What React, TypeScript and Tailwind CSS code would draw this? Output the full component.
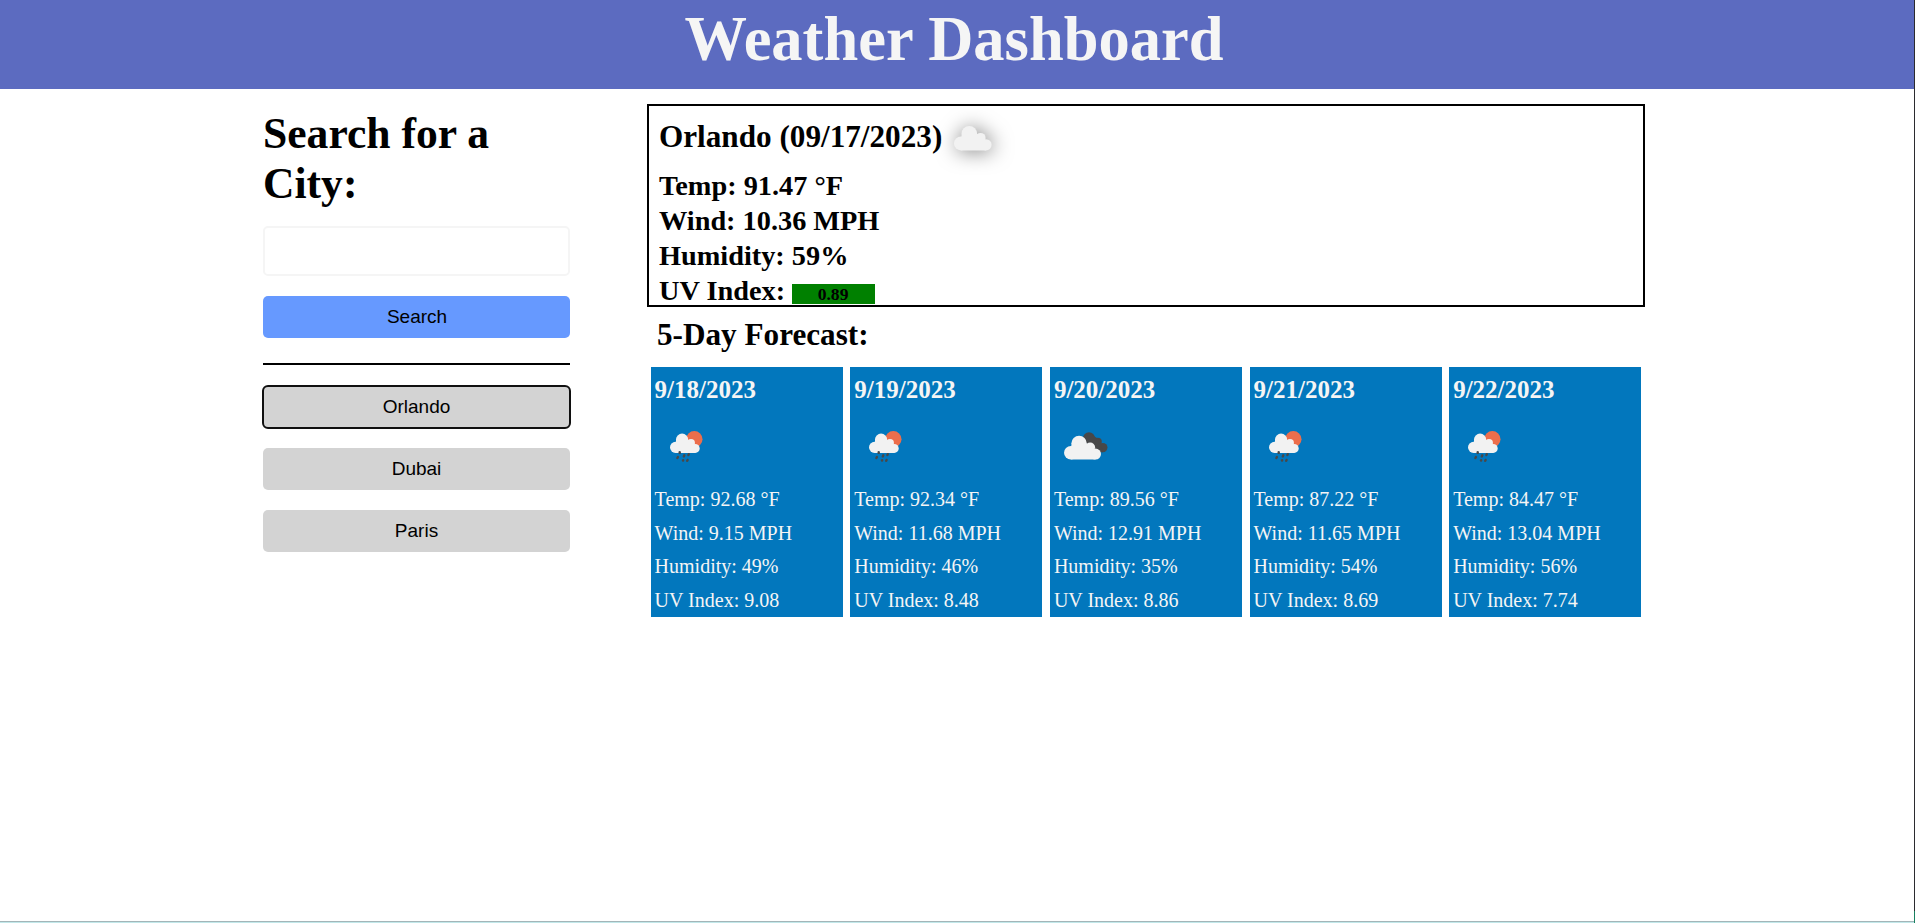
const days = [
  { date: "9/18/2023", icon: "rain", temp: "92.68", wind: "9.15", hum: "49", uv: "9.08" },
  { date: "9/19/2023", icon: "rain", temp: "92.34", wind: "11.68", hum: "46", uv: "8.48" },
  { date: "9/20/2023", icon: "clouds", temp: "89.56", wind: "12.91", hum: "35", uv: "8.86" },
  { date: "9/21/2023", icon: "rain", temp: "87.22", wind: "11.65", hum: "54", uv: "8.69" },
  { date: "9/22/2023", icon: "rain", temp: "84.47", wind: "13.04", hum: "56", uv: "7.74" },
];

const cities = ["Orlando", "Dubai", "Paris"];

function CloudShape() {
  return (
    <g fill="#f2f2f2">
      <circle cx="7" cy="17.4" r="7" />
      <circle cx="15.3" cy="7.8" r="7.8" />
      <circle cx="26.6" cy="11.9" r="5" />
      <circle cx="32" cy="18.8" r="5.6" />
      <path d="M7 24.4V12L8 8H22.500L27 9L31 14L32 24.4Z" />
    </g>
  );
}

function Cloud() {
  return (
    <svg width="38" height="25" viewBox="0 0 38 25" className="mt-[19.5px] ml-3 self-start overflow-visible drop-shadow-[2px_1px_10px_rgba(0,0,0,0.5)]">
      <CloudShape />
    </svg>
  );
}

function Rain() {
  return (
    <svg width="60" height="50" viewBox="0 0 60 50" className="mt-[17px]">
      <circle cx="39.3" cy="19.2" r="8.2" fill="#ec6e4c" />
      <g transform="translate(15 13.6) scale(0.79)">
        <CloudShape />
      </g>
      <path d="M24.700 32.100v.8M29.300 35.300l-.5 1.200M33.800 34.200l-.4.900M22.900 37.100l-.5.900M28.200 40.200l-.2.300M32.600 39.900l-.4.900" stroke="#484849" strokeWidth="2.4" strokeLinecap="round" />
    </svg>
  );
}

function Clouds() {
  return (
    <svg width="60" height="50" viewBox="0 0 60 50" className="mt-[17px] ml-[1.500px]">
      <g fill="#484849">
        <circle cx="34" cy="18.3" r="6" />
        <circle cx="42.8" cy="21.8" r="4" />
        <circle cx="47.8" cy="27.6" r="4.700" />
        <path d="M34 13L45 20L48 32.300H40L30 20Z" />
      </g>
      <g transform="translate(9 15.800) scale(0.985 0.970)">
        <CloudShape />
      </g>
    </svg>
  );
}

export default function App() {
  return (
    <div className="flex h-[923px] w-full bg-white font-['Liberation_Serif',serif] text-black">
      <div className="flex min-w-0 flex-1 flex-col">
        <header className="h-[89px] bg-[#5c6bc0]">
          <h1 className="pt-[5px] pr-1.5 text-center text-[62.500px] leading-[69px] font-bold text-[#f5f5f5]">Weather Dashboard</h1>
        </header>
        <main className="flex flex-1 items-start pl-[263px]">
          <aside className="w-[307px] pt-5">
            <h2 className="text-[43.600px] leading-[49.500px] font-bold">Search for a City:</h2>
            <input className="mt-[18px] block h-[50px] w-full rounded-[5px] border-2 border-[#f5f5f5] bg-white px-2" />
            <button className="mt-5 block h-[42px] w-full rounded-[5px] bg-[#6699ff] pl-px font-['Liberation_Sans',sans-serif] text-[19px]">Search</button>
            <hr className="mt-[25px] mb-[21px] border-t-2 border-black" />
            <div className="flex flex-col gap-5">
              {cities.map((c, i) => (
                <button
                  key={c}
                  className={
                    i === 0
                      ? "h-[42px] rounded-[5px] bg-[#d3d3d3] font-['Liberation_Sans',sans-serif] text-[19px] outline-2 -outline-offset-1 outline-[#101010]"
                      : "h-[42px] rounded-[5px] bg-[#d3d3d3] font-['Liberation_Sans',sans-serif] text-[19px]"
                  }
                >
                  {c}
                </button>
              ))}
            </div>
          </aside>
          <section className="ml-[77px] w-[998px] pt-[15px]">
            <div className="h-[203px] border-2 border-black pl-2.5 font-bold">
              <div className="flex h-[62px] items-center">
                <h2 className="text-[31.200px] leading-[36px]">Orlando (09/17/2023)</h2>
                <Cloud />
              </div>
              <div className="text-[28.300px] leading-[35px]">
                <p>Temp: 91.47 °F</p>
                <p>Wind: 10.36 MPH</p>
                <p>Humidity: 59%</p>
                <div className="flex">
                  <p>UV Index:</p>
                  <span className="mt-[11px] ml-[6.500px] h-5 w-[83px] bg-[#008000] text-center text-[17.600px] leading-5">0.89</span>
                </div>
              </div>
            </div>
            <h2 className="mt-[10px] ml-[10px] text-[31.200px] leading-[36px] font-bold">5-Day Forecast:</h2>
            <div className="mt-3.5 ml-[3.800px] flex justify-between pr-[3.600px]">
              {days.map((d) => (
                <article key={d.date} className="h-[250px] w-[192px] bg-[#0277bd] pl-[3.800px] text-[20px] text-[#f5f5f5]">
                  <h3 className="pt-[9px] text-[25px] leading-[27px] font-bold">{d.date}</h3>
                  <div className="h-[80px] overflow-hidden">{d.icon === "rain" ? <Rain /> : <Clouds />}</div>
                  <div className="leading-[33.700px]">
                    <p>Temp: {d.temp} °F</p>
                    <p>Wind: {d.wind} MPH</p>
                    <p>Humidity: {d.hum}%</p>
                    <p>UV Index: {d.uv}</p>
                  </div>
                </article>
              ))}
            </div>
          </section>
        </main>
        <div className="h-0.5 border-t border-[#a3b5b8] bg-[#c2e8ea]" />
      </div>
      <div className="flex w-px flex-col bg-[#2b2b2f]">
        <div className="mt-auto h-3 bg-[#1a8060]" />
      </div>
    </div>
  );
}
